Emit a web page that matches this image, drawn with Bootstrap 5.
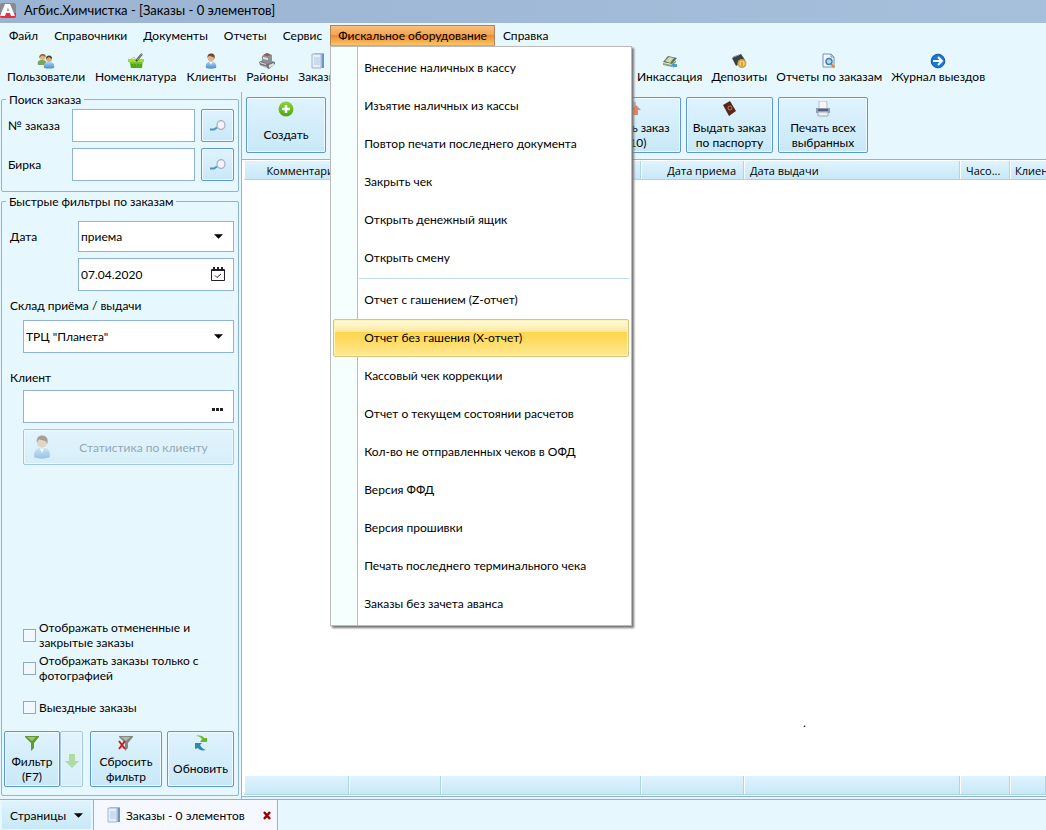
<!DOCTYPE html>
<html lang="ru">
<head>
<meta charset="utf-8">
<meta name="viewport" content="width=device-width, initial-scale=1">
<title>Агбис.Химчистка</title>
<link rel="stylesheet" href="https://cdn.jsdelivr.net/npm/bootstrap@5.3.0/dist/css/bootstrap.min.css">
<style>
:root{--sky:#e7f7fe;--line:#8fb1de;--edge:#5b97dc;--face:linear-gradient(#dff3fe,#c8e8f7)}
body{font:12px/15px Lato,"Open Sans",sans-serif;color:#000;background:var(--sky);overflow-x:hidden}
a{color:#000;text-decoration:none}
button{color:#000}
svg{display:block;flex:none}
.titlebar{height:23px;padding-bottom:3px;background:linear-gradient(90deg,#9bb4d2,#a6bfdb);font-size:13px}
.menubar{height:27px;padding:2px 1px 4px}
.menubar .nav-link{color:#000;padding:2px 7px;height:21px;border:1px solid transparent}
.menubar .nav-link.show{background:linear-gradient(#fbc078,#f5a455 45%,#ee8a34 50%,#fbc566);border-color:#a9855c;border-bottom-color:#d8a868}
.fiscal{top:100%;left:0;width:302px;margin:0;padding:2px;border:1px solid #bbb;border-radius:0;font-size:12px;background:linear-gradient(90deg,#f5fffe 26px,#bbb 26px,#bbb 27px,#fff 27px);box-shadow:2px 2px 2px #777;--bs-dropdown-spacer:0}
.fiscal .dropdown-item{height:38px;padding:10px 30px;line-height:16px;color:#000;border:1px solid transparent}
.fiscal .dropdown-item.active{background:linear-gradient(#fffbe0,#fdeaa0 32%,#fed650 33%,#fed95a 50%,#ffe894);border-color:#d9c27c;border-radius:2px;box-shadow:inset 0 0 0 1px #fff3b8}
.fiscal .dropdown-divider{margin:1px 0 2px 26px;border-color:#c4dcf0;opacity:1}
.toolbar{height:42px;padding:3px 7px 0}
.toolbar .btn,.tile{font-size:12px;line-height:15px;color:#000}
.toolbar .btn{padding:0;border:0;border-radius:0;white-space:nowrap}
.lefttools{width:630px;overflow:hidden;gap:10px}
.righttools{gap:9px}
.sidebar{width:241px;padding:0 2px 3px 1px}
.group{border:1px solid var(--line);border-radius:2px}
.group legend{font-size:12px;line-height:15px;padding:0 3px;margin-left:4px;height:14px}
.field,.form-select.field{height:33px;border:1px solid var(--line);border-radius:0;padding:0 2px;font-size:12px;line-height:15px;color:#000;background-color:#fff}
.form-select.field{background-image:url("data:image/svg+xml,%3Csvg xmlns='http://www.w3.org/2000/svg' viewBox='0 0 10 5'%3E%3Cpath d='M0 0h10L5 5z'/%3E%3C/svg%3E");background-size:9px 5px;background-position:right 10px center;padding:0 24px 0 2px}
.form-select.low{height:31px}
.tile{background:var(--face);border:1px solid var(--edge);border-radius:2px;box-shadow:inset 0 0 0 1px #f2fbff;padding:0}
.tile:disabled{opacity:.5;color:#456}
.tall{height:56px;padding-top:3px;gap:3px}
.one{margin-top:7px}
.seek{width:33px;height:33px;flex:none}
.inside{right:9px;top:8px;border:0;background:none;padding:0}
.form-check-input.tick{width:13px;height:13px;margin:0;border:1px solid #8ba9d0;border-radius:0;background-color:#f3f8ff;flex:none}
.checks{gap:3px}
.searchgroup{height:100px}
.seekrow{gap:6px;padding:0 4px 0 6px;margin-top:3px;margin-bottom:6px}
.seekrow label{width:58px;flex:none}
.filtergroup{margin-top:2px}
.daterow{padding:0 4px 0 8px;margin-top:13px}
.daterow label{width:68px;flex:none}
.dateline{margin:6px 4px 0 76px}
.cap1{margin:7px 0 7px 8px}
.cap2{margin:17px 0 5px 8px}
.indent,.form-select.indent,.stat{margin:0 4px 0 21px;width:auto}
.stat{margin-top:6px;height:36px;padding-left:6px}
.checks label{padding-left:21px;gap:3px}
.lastcheck{margin:14px 0 16px}
.filterbar{padding:0 4px 8px 2px}
.w56{width:56px}.w23{width:23px}.w72{width:72px;margin-left:7px}.w67{width:67px;margin-left:5px}
.w80{width:80px}.w96{width:96px}.w87{width:87px}.w90{width:90px}
.issue{margin-left:254px}
.workarea{border-left:1px solid var(--line);min-width:0}
.actions{padding:5px 4px 6px;gap:5px}
.gridbox{border-top:1px solid var(--line);border-bottom:1px solid var(--line);background:#fff;padding:1px 0 1px 2px;margin-bottom:2px}
.orders{table-layout:fixed;width:100%;height:100%;border-collapse:separate;border-spacing:0}
.orders th,.orders tfoot td{height:19px;padding:0 7px 0 6px;font:11px/15px "Open Sans",sans-serif;overflow:hidden;white-space:nowrap;background:var(--face);border-right:1px solid #add5ea;border-bottom:1px solid #add5ea;box-shadow:inset 1px 0 #fff}
.orders th:last-child{padding:0 0 0 5px;border-right:0}
.orders tbody td{vertical-align:bottom;padding:0 0 46px 59px}
.c105{width:105px}.c92{width:92px}.c200{width:200px}.c103{width:103px}.c216{width:216px}.c50{width:50px}
.pages{height:31px;border-top:1px solid var(--line)}
.pages .tile{border:0;box-shadow:none;border-radius:0;width:89px;margin:1px 2px 1px 2px}
.tabpage{width:185px;background:#f5f9ff;border:1px solid var(--line);border-width:0 1px;padding:0 6px 0 12px}
</style>
</head>
<body class="d-flex flex-column min-vh-100">
<svg class="position-absolute" width="0" height="0" aria-hidden="true">
<defs>
<linearGradient id="blu" x2="0" y2="1"><stop stop-color="#a9d4f2"/><stop offset="1" stop-color="#4a8fc8"/></linearGradient>
<linearGradient id="grn" x2="0" y2="1"><stop stop-color="#8cd63c"/><stop offset="1" stop-color="#4aa512"/></linearGradient>
</defs>
<symbol id="person" viewBox="0 0 16 16"><path d="M3 15c-1-4 1-6 4-6.500h2c3 .5 5 2.500 4 6.500q-5 1.500-10 0" fill="url(#blu)"/><path d="M6.500 9l1.500 3 1.500-3" fill="#fff"/><circle cx="8" cy="5" r="3.400" fill="#dfb48b"/><path d="M4.500 5C4 1 7 0 9 .5s3.500 2 2.500 5.500C11 3 8 4 6 2.800z" fill="#6b4a35"/></symbol>
<symbol id="doc" viewBox="0 0 16 16"><path d="M4 0h10v15H4z" fill="#a3bbdc"/><path d="M12 1h2v14h-2z" fill="#6f94c6"/><path d="M2 1h9v14H2z" fill="#e6eef8" stroke="#9db6d6"/><path d="M4 5h6M4 7h6M4 9h6M4 11h6" stroke="#b4c8e2"/></symbol>
<symbol id="lens" viewBox="0 0 18 12"><path d="M1 9.500h4l3-2" stroke="#4f94b4" stroke-width="2" fill="none"/><ellipse cx="12" cy="5" rx="4" ry="4.400" fill="#f3f3fb" stroke="#aeb0c2" stroke-width="1.300"/></symbol>
<symbol id="funnel" viewBox="0 0 16 16"><path d="M1 1h14v1L10 8v5l-3 3V8L1 2z" fill="currentColor"/><path d="M3 2h9L8 6z" fill="#fff" opacity=".4"/></symbol>
</svg>

<header>
<div class="titlebar d-flex align-items-center">
<svg width="16" height="17" viewBox="0 0 16 17"><rect y="1" width="16" height="15" rx="2" fill="#8a8b90"/><path d="M0 11h16v3q0 2-2 2H2q-2 0-2-2z" fill="#e8303a"/><path d="M0 14L5 2h5l5 12h-4l-1-3H6l-1 3zM7 9h2L8 5z" fill="#fff"/></svg>
<span class="ms-2">Агбис.Химчистка - [Заказы - 0 элементов]</span>
</div>
<nav class="menubar">
<ul class="nav flex-nowrap text-nowrap">
<li><a class="nav-link" href="#">Файл</a></li>
<li><a class="nav-link" href="#">Справочники</a></li>
<li><a class="nav-link" href="#">Документы</a></li>
<li><a class="nav-link" href="#">Отчеты</a></li>
<li><a class="nav-link" href="#">Сервис</a></li>
<li class="dropdown"><a class="nav-link show" href="#" role="button" data-bs-toggle="dropdown" aria-expanded="true">Фискальное оборудование</a>
<div class="dropdown-menu fiscal show">
<a class="dropdown-item" href="#">Внесение наличных в кассу</a>
<a class="dropdown-item" href="#">Изъятие наличных из кассы</a>
<a class="dropdown-item" href="#">Повтор печати последнего документа</a>
<a class="dropdown-item" href="#">Закрыть чек</a>
<a class="dropdown-item" href="#">Открыть денежный ящик</a>
<a class="dropdown-item" href="#">Открыть смену</a>
<hr class="dropdown-divider">
<a class="dropdown-item" href="#">Отчет с гашением (Z-отчет)</a>
<a class="dropdown-item active" href="#">Отчет без гашения (X-отчет)</a>
<a class="dropdown-item" href="#">Кассовый чек коррекции</a>
<a class="dropdown-item" href="#">Отчет о текущем состоянии расчетов</a>
<a class="dropdown-item" href="#">Кол-во не отправленных чеков в ОФД</a>
<a class="dropdown-item" href="#">Версия ФФД</a>
<a class="dropdown-item" href="#">Версия прошивки</a>
<a class="dropdown-item" href="#">Печать последнего терминального чека</a>
<a class="dropdown-item" href="#">Заказы без зачета аванса</a>
</div></li>
<li><a class="nav-link" href="#">Справка</a></li>
</ul>
</nav>
<div class="toolbar d-flex">
<div class="lefttools d-flex flex-shrink-0">
<button class="btn d-flex flex-column align-items-center"><svg width="18" height="16" viewBox="0 0 18 16"><path d="M1 12c-1-4 1-5 4-5s5 1 4 5z" fill="#7ba65a"/><circle cx="5.500" cy="4" r="3" fill="#dbb488"/><path d="M2 5c0-5 7-5 7-1L5 2.500z" fill="#8b6b36"/><path d="M7 15c-1-4 1-6 5-6s6 2 5 6q-5 1-10 0" fill="url(#blu)"/><circle cx="12" cy="6" r="3" fill="#dba77c"/><path d="M9 6c0-5 7-4 6 0l-3-2z" fill="#4e4038"/></svg>Пользователи</button>
<button class="btn d-flex flex-column align-items-center"><svg width="16" height="16" viewBox="0 0 16 16"><path d="M1 7h14l-1 8H3z" fill="url(#grn)"/><path d="M0 6h16v3H0z" fill="#a4dc28"/><path d="M4 11v2M7 11v2M10 11v2M13 11v2" stroke="#3d8a14"/><path d="M8 8l6-7" stroke="#3f4d45" stroke-width="2"/><path d="M9 7l5-6" stroke="#cdd4cc" stroke-width=".7"/><path d="M3 6l3-2 2 3" stroke="#b6bfae" fill="none"/></svg>Номенклатура</button>
<button class="btn d-flex flex-column align-items-center"><svg width="16" height="16"><use href="#person"/></svg>Клиенты</button>
<button class="btn d-flex flex-column align-items-center"><svg width="16" height="16" viewBox="0 0 16 16"><path d="M0 9l6-3 10 3v2l-6 5-9-4z" fill="#73777c"/><path d="M3 3l5-3 5 2v7l-5 2-5-3z" fill="#8d9195"/><path d="M4 4l5 1v2L4 6zM1 9l6 2v1l-6-2zM10 12l5-2v2l-5 3zM2 12l6 2v1z" fill="#e1e4e6"/><path d="M4 2l4-2 4 2-3 1z" fill="#a24f50"/></svg>Районы</button>
<button class="btn d-flex flex-column align-items-center"><svg width="16" height="16"><use href="#doc"/></svg>Заказы</button>
</div>
<div class="righttools d-flex">
<button class="btn d-flex flex-column align-items-center"><svg width="16" height="16" viewBox="0 0 16 16"><path d="M1 9l5-6 9 2-5 6z" fill="#5a7554"/><path d="M3 8l4-4 5 1-4 5z" fill="#cfdcae"/><path d="M1 10l9 2 4-5v2l-4 5-9-2z" fill="#8ba37e"/><path d="M9 12l3-3v2h3v3h-3v1z" fill="#4b9dc9"/></svg>Инкассация</button>
<button class="btn d-flex flex-column align-items-center"><svg width="16" height="16" viewBox="0 0 16 16"><path d="M1 5l9-4 4 6-9 6z" fill="#3c4243"/><path d="M2 4l6-2" stroke="#8d9a90"/><circle cx="11" cy="10.500" r="4.500" fill="#d7a338"/><circle cx="11" cy="10.500" r="2.700" fill="#f2d580"/><path d="M11 9v4" stroke="#a46f16"/></svg>Депозиты</button>
<button class="btn d-flex flex-column align-items-center"><svg width="16" height="16" viewBox="0 0 16 16"><path d="M2 1h8l3 3v10H2z" fill="#f3f9fe" stroke="#6c93bd"/><path d="M10 1v3h3" fill="none" stroke="#6c93bd"/><path d="M10 11l3.500 3.500" stroke="#df8a3b" stroke-width="2"/><circle cx="8" cy="8.500" r="3" fill="#a9dcf4" stroke="#457eaf" stroke-width="1.500"/></svg>Отчеты по заказам</button>
<button class="btn d-flex flex-column align-items-center"><svg width="16" height="16" viewBox="0 0 16 16"><circle cx="8" cy="8" r="6.800" fill="#1678d8" stroke="#0b55aa"/><path d="M3 8h8M8 4l4 4-4 4" fill="none" stroke="#fff" stroke-width="2"/></svg>Журнал выездов</button>
</div>
</div>
</header>

<main class="d-flex flex-grow-1">
<aside class="sidebar d-flex flex-column flex-shrink-0">
<fieldset class="group searchgroup">
<legend class="float-none w-auto mb-0">Поиск заказа</legend>
<div class="d-flex align-items-center seekrow"><label for="num">№ заказа</label><input id="num" class="form-control field"><button class="tile seek d-flex align-items-center justify-content-center" aria-label="Найти заказ"><svg width="18" height="12"><use href="#lens"/></svg></button></div>
<div class="d-flex align-items-center seekrow"><label for="tag">Бирка</label><input id="tag" class="form-control field"><button class="tile seek d-flex align-items-center justify-content-center" aria-label="Найти бирку"><svg width="18" height="12"><use href="#lens"/></svg></button></div>
</fieldset>
<fieldset class="group filtergroup flex-grow-1 d-flex flex-column">
<legend class="float-none w-auto mb-0">Быстрые фильтры по заказам</legend>
<div class="d-flex align-items-center daterow"><label for="kind">Дата</label><select id="kind" class="form-select field low"><option>приема</option></select></div>
<div class="position-relative dateline"><input class="form-control field" value="07.04.2020" aria-label="Дата приема"><button class="position-absolute inside" aria-label="Календарь"><svg width="14" height="15" viewBox="0 0 14 15"><path d="M.5 3.500h13v11H.5z" fill="#fff" stroke="#222"/><path d="M1 3h12v2H1zM2 1h2v3H2zM6 1h2v3H6zM10 1h2v3h-2z" fill="#222"/><path d="M4 9.500l2 2 4-3.500" fill="none" stroke="#222"/></svg></button></div>
<label class="cap1" for="store">Склад приёма / выдачи</label>
<select id="store" class="form-select field indent"><option>ТРЦ "Планета"</option></select>
<label class="cap2" for="client">Клиент</label>
<div class="position-relative indent"><input id="client" class="form-control field"><button class="position-absolute inside" aria-label="Выбрать клиента"><svg width="14" height="20" viewBox="0 0 14 20"><path d="M1 10h3v3H1zM5 10h3v3H5zM9 10h3v3H9z" fill="#222"/></svg></button></div>
<button class="tile stat d-flex align-items-center" disabled><svg width="24" height="24"><use href="#person"/></svg><span class="flex-grow-1">Статистика по клиенту</span></button>
<div class="mt-auto checks d-flex flex-column">
<label class="d-flex align-items-center"><input type="checkbox" class="form-check-input tick"><span>Отображать отмененные и<br>закрытые заказы</span></label>
<label class="d-flex align-items-center"><input type="checkbox" class="form-check-input tick"><span>Отображать заказы только с<br>фотографией</span></label>
<label class="d-flex align-items-center lastcheck"><input type="checkbox" class="form-check-input tick"><span>Выездные заказы</span></label>
</div>
<div class="d-flex filterbar">
<button class="tile tall w56 d-flex flex-column align-items-center"><svg width="16" height="16" color="#5f9a2c"><use href="#funnel"/></svg><span>Фильтр<br>(F7)</span></button>
<button class="tile tall w23 d-flex align-items-center justify-content-center" disabled aria-label="Ещё"><svg width="14" height="14" viewBox="0 0 14 14"><path d="M4 0h6v7h4l-7 7-7-7h4z" fill="#7cc244"/></svg></button>
<button class="tile tall w72 d-flex flex-column align-items-center"><svg width="16" height="16" viewBox="0 0 16 16"><svg color="#838a80"><use href="#funnel"/></svg><path d="M1 6l6 8M7 6l-6 8" stroke="#cc1a1a" stroke-width="2"/></svg><span>Сбросить<br>фильтр</span></button>
<button class="tile tall w67 d-flex flex-column align-items-center"><svg width="16" height="16" viewBox="0 0 16 16"><path d="M3 1c4-1 7 0 8 2h3v4H7l2-3Q7 1 3 1" fill="#69b82c"/><path d="M13 15c-4 1-7 0-8-2l-3 1V8h7L7 10q2 4 6 5" fill="#2f88b5"/></svg><span class="one">Обновить</span></button>
</div>
</fieldset>
</aside>
<section class="workarea flex-grow-1 d-flex flex-column">
<div class="actions d-flex">
<button class="tile tall w80 d-flex flex-column align-items-center"><svg width="16" height="16" viewBox="0 0 16 16"><circle cx="8" cy="8" r="7.500" fill="url(#grn)"/><path d="M8 4v8M4 8h8" stroke="#fff" stroke-width="2.500"/></svg><span class="one">Создать</span></button>
<button class="tile tall w96 issue d-flex flex-column align-items-center"><svg width="16" height="16" viewBox="0 0 16 16"><path d="M3 1h8v13H3z" fill="#b9bec4"/><path d="M9 14V9H6l5-5 5 5h-3v5z" fill="#e58560"/></svg><span>Выдать заказ<br>(F10)</span></button>
<button class="tile tall w87 d-flex flex-column align-items-center"><svg width="16" height="16" viewBox="0 0 16 16"><path d="M1 4l7-4 6 10-7 5z" fill="#5c2318"/><circle cx="8" cy="7" r="2" fill="none" stroke="#b18263"/></svg><span>Выдать заказ<br>по паспорту</span></button>
<button class="tile tall w90 d-flex flex-column align-items-center"><svg width="16" height="16" viewBox="0 0 16 16"><path d="M4 0h7l1 2v6H4z" fill="#f4f6f9" stroke="#b6bdc8"/><path d="M1 7h14v5H1z" fill="#8f9dbb"/><path d="M3 8h10v2H3z" fill="#55617c"/><path d="M3 11h10v4H3z" fill="#edf0f3" stroke="#a3a9b2"/></svg><span>Печать всех<br>выбранных</span></button>
</div>
<div class="gridbox flex-grow-1 d-grid">
<table class="orders">
<colgroup><col class="c105"><col class="c92"><col class="c200"><col class="c103"><col class="c216"><col class="c50"><col></colgroup>
<thead><tr><th class="text-end">Комментарий</th><th></th><th></th><th class="text-end">Дата приема</th><th>Дата выдачи</th><th>Часо...</th><th>Клиен</th></tr></thead>
<tbody><tr><td></td><td></td><td></td><td></td><td>.</td><td></td><td></td></tr></tbody>
<tfoot><tr><td></td><td></td><td></td><td></td><td></td><td></td><td></td></tr></tfoot>
</table>
</div>
</section>
</main>
<footer class="pages d-flex">
<button class="tile d-flex align-items-center justify-content-center gap-2">Страницы<svg width="9" height="5" viewBox="0 0 10 5"><path d="M0 0h10L5 5z"/></svg></button>
<div class="tabpage d-flex align-items-center"><svg width="16" height="16"><use href="#doc"/></svg><a class="ms-1 flex-grow-1" href="#">Заказы - 0 элементов</a><button class="border-0 bg-transparent p-0" aria-label="Закрыть"><svg width="8" height="9" viewBox="0 0 8 9"><path d="M1 1l6 7M7 1L1 8" stroke="#900" stroke-width="2.500"/></svg></button></div>
</footer>
<script src="https://cdn.jsdelivr.net/npm/bootstrap@5.3.0/dist/js/bootstrap.bundle.min.js"></script>
</body>
</html>
